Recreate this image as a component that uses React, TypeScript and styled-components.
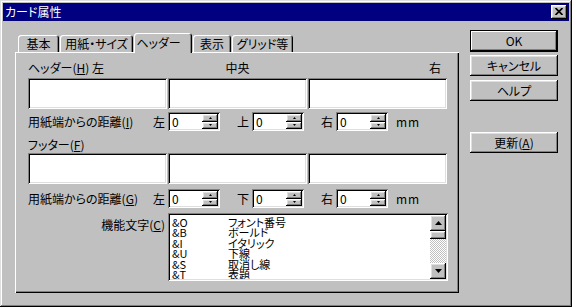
import React from "react";
import styled, { createGlobalStyle } from "styled-components";

const GlobalStyle = createGlobalStyle`
  html, body { margin: 0; padding: 0; background: #c0c0c0; }
  body {
    font-family: "Noto Sans CJK JP", "Noto Sans", sans-serif;
    font-size: 12px;
    font-feature-settings: "palt";
    color: #000;
  }
  * { box-sizing: border-box; }
`;

const raised =
  "inset -1px -1px #000, inset 1px 1px #fff, inset -2px -2px #808080, inset 2px 2px #dfdfdf";
const sunken =
  "inset 1px 1px #808080, inset -1px -1px #fff, inset 2px 2px #000, inset -2px -2px #dfdfdf";

const Window = styled.div`
  width: 572px;
  height: 307px;
  padding: 3px;
  background: #c0c0c0;
  box-shadow: inset -1px -1px #000, inset 1px 1px #dfdfdf, inset -2px -2px #808080,
    inset 2px 2px #fff;
  display: flex;
  flex-direction: column;
`;

const TitleBar = styled.div`
  height: 18px;
  background: #000080;
  color: #fff;
  display: flex;
  align-items: center;
  justify-content: space-between;
  padding: 0 2px;
  line-height: 12px;
`;

const CloseButton = styled.div`
  width: 16px;
  height: 14px;
  background: #c0c0c0;
  box-shadow: ${raised};
  display: flex;
  align-items: center;
  justify-content: center;
  padding-bottom: 1px;
`;

const Body = styled.div`
  display: flex;
  padding: 9px 0 0 12px;
`;

const TabArea = styled.div`
  width: 444px;
  margin-top: 3px;
`;

const TabRow = styled.div`
  display: flex;
  align-items: flex-end;
  height: 19px;
  padding-left: 3px;
  gap: 1px;
`;

const Tab = styled.div<{ $width: number; $active?: boolean }>`
  width: ${(p) => p.$width}px;
  height: ${(p) => (p.$active ? 20 : 17)}px;
  margin-bottom: ${(p) => (p.$active ? -1 : 0)}px;
  position: relative;
  z-index: ${(p) => (p.$active ? 1 : 0)};
  background: #c0c0c0;
  border-radius: 3px 3px 0 0;
  box-shadow: inset 1px 1px #fff, inset -1px 0 #000, inset -2px 0 #808080;
  display: flex;
  align-items: center;
  justify-content: center;
  padding: ${(p) => (p.$active ? "0 9px 1px 0" : "1px 0 0 0")};
  line-height: 12px;
  white-space: nowrap;
`;

const Panel = styled.div`
  height: 241px;
  background: #c0c0c0;
  box-shadow: inset 1px 1px #fff, inset -1px -1px #000, inset -2px -2px #808080;
  padding: 10px 10px 0 13px;
  display: flex;
  flex-direction: column;
`;

const ThreeColumns = styled.div<{ $height: number; $top?: number; $bottom?: number }>`
  display: grid;
  grid-template-columns: repeat(3, 139px);
  column-gap: 1px;
  height: ${(p) => p.$height}px;
  margin-top: ${(p) => p.$top ?? 0}px;
  margin-bottom: ${(p) => p.$bottom ?? 0}px;
  line-height: 12px;
`;

const ColumnLabel = styled.div<{ $align: "left" | "center" | "right" }>`
  text-align: ${(p) => p.$align};
  padding-right: ${(p) => (p.$align === "right" ? 6 : 0)}px;
  white-space: nowrap;
`;

const TextBox = styled.div`
  background: #fff;
  box-shadow: ${sunken};
`;

const Mnemonic = styled.u`
  text-decoration: underline;
  text-underline-offset: 1px;
`;

const DistanceRow = styled.div<{ $top: number }>`
  display: flex;
  align-items: center;
  height: 19px;
  margin-top: ${(p) => p.$top}px;
  line-height: 12px;
  white-space: nowrap;
`;

const RowCaption = styled.div`
  width: 125px;
`;

const SideGroup = styled.div<{ $last?: boolean }>`
  display: flex;
  align-items: center;
  margin-right: ${(p) => (p.$last ? 8 : 17)}px;
`;

const SideLabel = styled.div`
  width: 15px;
`;

const Spinner = styled.div`
  width: 52px;
  height: 19px;
  background: #fff;
  box-shadow: ${sunken};
  display: flex;
  padding: 2px;
`;

const SpinValue = styled.div`
  flex: 1;
  padding-left: 2px;
  line-height: 15px;
`;

const SpinButtons = styled.div`
  width: 16px;
  display: flex;
  flex-direction: column;
`;

const SpinButton = styled.div`
  flex: 1;
  background: #c0c0c0;
  box-shadow: ${raised};
  display: flex;
  align-items: center;
  justify-content: center;
`;

const Unit = styled.div`
  letter-spacing: 1px;
`;

const FunctionRow = styled.div`
  display: flex;
  margin-top: 5px;
`;

const FunctionCaption = styled.div`
  width: 137px;
  margin-right: 3px;
  padding-top: 6px;
  text-align: right;
  line-height: 12px;
  white-space: nowrap;
`;

const ListBox = styled.div`
  width: 280px;
  height: 68px;
  background: #fff;
  box-shadow: ${sunken};
  display: flex;
  padding: 2px;
`;

const ListItems = styled.div`
  flex: 1;
  overflow: hidden;
  padding: 1.5px 0 0 2px;
  font-size: 11px;
  line-height: 10.5px;
`;

const ListItem = styled.div`
  display: flex;
  height: 10.5px;
  white-space: nowrap;
`;

const ItemCode = styled.span`
  width: 56px;
`;

const ScrollBar = styled.div`
  width: 16px;
  display: flex;
  flex-direction: column;
`;

const ScrollArrow = styled.div`
  height: 16px;
  background: #c0c0c0;
  box-shadow: ${raised};
  display: flex;
  align-items: center;
  justify-content: center;
`;

const ScrollThumb = styled.div`
  height: 8px;
  background: #c0c0c0;
  box-shadow: ${raised};
`;

const ScrollTrack = styled.div`
  flex: 1;
  background-color: #fff;
  background-image: repeating-conic-gradient(#c0c0c0 0 25%, #fff 0 50%);
  background-size: 2px 2px;
`;

const ButtonColumn = styled.div`
  margin-left: 11px;
  width: 88px;
  display: flex;
  flex-direction: column;
`;

const Button = styled.div<{ $default?: boolean; $gap?: number }>`
  height: ${(p) => (p.$default ? 22 : 21)}px;
  margin-top: ${(p) => p.$gap ?? 0}px;
  background: #c0c0c0;
  box-shadow: ${(p) =>
    p.$default
      ? "inset 0 0 0 1px #000, inset -2px -2px #000, inset 2px 2px #fff, inset -3px -3px #808080"
      : raised};
  display: flex;
  align-items: center;
  justify-content: center;
  line-height: 12px;
  white-space: nowrap;
`;

const Arrow = ({ up, w, h }: { up: boolean; w: number; h: number }) => (
  <svg width={w} height={h} viewBox={`0 0 ${w} ${h}`}>
    <polygon
      points={up ? `${w / 2},0 ${w},${h} 0,${h}` : `0,0 ${w},0 ${w / 2},${h}`}
      fill="#000"
    />
  </svg>
);

const SpinBox = ({ value }: { value: string }) => (
  <Spinner>
    <SpinValue>{value}</SpinValue>
    <SpinButtons>
      <SpinButton>
        <Arrow up w={3} h={2} />
      </SpinButton>
      <SpinButton>
        <Arrow up={false} w={3} h={2} />
      </SpinButton>
    </SpinButtons>
  </Spinner>
);

const Distance = ({ mnemonic, sides, top }: { mnemonic: string; sides: string[]; top: number }) => (
  <DistanceRow $top={top}>
    <RowCaption>
      用紙端からの距離(<Mnemonic>{mnemonic}</Mnemonic>)
    </RowCaption>
    {sides.map((s, i) => (
      <SideGroup key={s} $last={i === sides.length - 1}>
        <SideLabel>{s}</SideLabel>
        <SpinBox value="0" />
      </SideGroup>
    ))}
    <Unit>mm</Unit>
  </DistanceRow>
);

const tabs = [
  { label: "基本", width: 41 },
  { label: "用紙・サイズ", width: 73 },
  { label: "ヘッダー", width: 58, active: true },
  { label: "表示", width: 38 },
  { label: "グリッド等", width: 61 },
];

const functions = [
  ["&O", "フォント番号"],
  ["&B", "ボールド"],
  ["&I", "イタリック"],
  ["&U", "下線"],
  ["&S", "取消し線"],
  ["&T", "表題"],
];

export default function App() {
  return (
    <>
      <GlobalStyle />
      <Window>
        <TitleBar>
          <span>カード属性</span>
          <CloseButton>
            <svg width="8" height="7" viewBox="0 0 8 7">
              <path d="M0.5 0 L7.5 7 M7.5 0 L0.5 7" stroke="#000" strokeWidth="1.7" />
            </svg>
          </CloseButton>
        </TitleBar>
        <Body>
          <TabArea>
            <TabRow>
              {tabs.map((t) => (
                <Tab key={t.label} $width={t.width} $active={t.active}>
                  {t.label}
                </Tab>
              ))}
            </TabRow>
            <Panel>
              <ThreeColumns $height={12} $bottom={4}>
                <ColumnLabel $align="left">
                  ヘッダー(<Mnemonic>H</Mnemonic>) 左
                </ColumnLabel>
                <ColumnLabel $align="center">中央</ColumnLabel>
                <ColumnLabel $align="right">右</ColumnLabel>
              </ThreeColumns>
              <ThreeColumns $height={31}>
                <TextBox />
                <TextBox />
                <TextBox />
              </ThreeColumns>
              <Distance mnemonic="I" sides={["左", "上", "右"]} top={3} />
              <ThreeColumns $height={12} $top={8} $bottom={2}>
                <ColumnLabel $align="left">
                  フッター(<Mnemonic>F</Mnemonic>)
                </ColumnLabel>
              </ThreeColumns>
              <ThreeColumns $height={31}>
                <TextBox />
                <TextBox />
                <TextBox />
              </ThreeColumns>
              <Distance mnemonic="G" sides={["左", "下", "右"]} top={5} />
              <FunctionRow>
                <FunctionCaption>
                  機能文字(<Mnemonic>C</Mnemonic>)
                </FunctionCaption>
                <ListBox>
                  <ListItems>
                    {functions.map(([code, name]) => (
                      <ListItem key={code}>
                        <ItemCode>{code}</ItemCode>
                        <span>{name}</span>
                      </ListItem>
                    ))}
                  </ListItems>
                  <ScrollBar>
                    <ScrollArrow>
                      <Arrow up w={7} h={4} />
                    </ScrollArrow>
                    <ScrollThumb />
                    <ScrollTrack />
                    <ScrollArrow>
                      <Arrow up={false} w={7} h={4} />
                    </ScrollArrow>
                  </ScrollBar>
                </ListBox>
              </FunctionRow>
            </Panel>
          </TabArea>
          <ButtonColumn>
            <Button $default>OK</Button>
            <Button $gap={3}>キャンセル</Button>
            <Button $gap={4}>ヘルプ</Button>
            <Button $gap={31}>
              更新(<Mnemonic>A</Mnemonic>)
            </Button>
          </ButtonColumn>
        </Body>
      </Window>
    </>
  );
}
